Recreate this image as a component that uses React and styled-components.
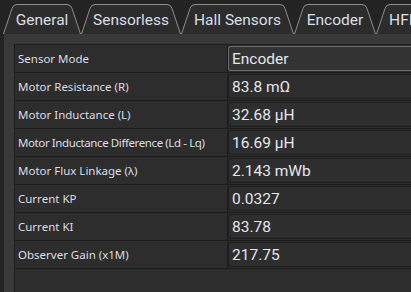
import React from "react";
import styled, { createGlobalStyle } from "styled-components";

const Global = createGlobalStyle`
  html, body { margin: 0; padding: 0; background: #232323; overflow: hidden; }
  body { width: 411px; height: 292px; }
`;

const Page = styled.div`
  width: 411px;
  height: 292px;
  background: #232323;
  display: flex;
  flex-direction: column;
  overflow: hidden;
`;

const TabBar = styled.div`
  height: 34px;
  display: flex;
  align-items: flex-end;
  padding-left: 3px;
  flex-shrink: 0;
`;

const Tab = styled.div`
  position: relative;
  height: 30px;
  flex-shrink: 0;
  width: ${(p) => p.$w}px;
  display: flex;
  align-items: center;
  justify-content: center;
  font-family: Roboto, "Liberation Sans", sans-serif;
  font-size: 15.5px;
  color: #dadee6;
  white-space: nowrap;
  span { position: relative; padding-top: 1px; }
`;

const TabShape = styled.svg`
  position: absolute;
  left: 0;
  top: 0;
  overflow: visible;
`;

const Pane = styled.div`
  flex: 1;
  margin-left: 4px;
  background: #393939;
  padding: 10px 0 0 10px;
  display: flex;
  min-height: 0;
`;

const Table = styled.div`
  flex: 1;
  background: #2d2d2d;
  border-top: 1px solid #1c1c1c;
  border-left: 1px solid #1c1c1c;
  display: grid;
  grid-template-columns: 213px 1fr;
  grid-auto-rows: 28px;
  align-content: start;
`;

const Label = styled.div`
  box-sizing: border-box;
  border-right: 1px solid #1c1c1c;
  border-bottom: 1px solid #1c1c1c;
  display: flex;
  align-items: center;
  padding-left: 3px;
  font-family: "Noto Sans", "Open Sans", sans-serif;
  font-size: 11.5px;
  letter-spacing: ${(p) => (p.$tight ? "-0.4px" : "0")};
  color: #dcdfe6;
  white-space: nowrap;
  overflow: hidden;
`;

const Cell = styled.div`
  box-sizing: border-box;
  border-bottom: 1px solid #1c1c1c;
  padding: 1px 0 1px 0;
  display: flex;
`;

const Field = styled.div`
  flex: 1;
  box-sizing: border-box;
  display: flex;
  align-items: center;
  padding-left: 3px;
  border: 1px solid ${(p) => (p.$combo ? "#6c6c6c" : "#1e1e1e")};
  border-right: none;
  border-radius: 3px 0 0 3px;
  background: ${(p) => (p.$combo ? "#333333" : "#2e2e2e")};
  font-family: Roboto, "Liberation Sans", sans-serif;
  font-size: 15.5px;
  color: #e4e7ee;
  white-space: nowrap;
`;

const tabs = [
  { name: "General", w: 78 },
  { name: "Sensorless", w: 100 },
  { name: "Hall Sensors", w: 113 },
  { name: "Encoder", w: 82 },
  { name: "HFI", w: 50 },
];

const rows = [
  ["Sensor Mode", "Encoder", true],
  ["Motor Resistance (R)", "83.8 mΩ"],
  ["Motor Inductance (L)", "32.68 μH"],
  ["Motor Inductance Difference (Ld - Lq)", "16.69 μH", false, true],
  ["Motor Flux Linkage (λ)", "2.143 mWb"],
  ["Current KP", "0.0327"],
  ["Current KI", "83.78"],
  ["Observer Gain (x1M)", "217.75"],
];

function TabOutline({ w }) {
  const h = 30;
  const s = 10;
  const r = 4;
  const d = `M0.5 ${h} L${s - 1} ${r + 0.5} Q${s} 0.5 ${s + r} 0.5 L${w - s - r} 0.5 Q${w - s} 0.5 ${w - s + 1} ${r + 0.5} L${w - 0.5} ${h}`;
  return (
    <TabShape width={w} height={h} viewBox={`0 0 ${w} ${h}`}>
      <path d={d + " Z"} fill="#2c2c2c" stroke="none" />
      <path d={d} fill="none" stroke="#8e8e8e" strokeWidth="1" />
    </TabShape>
  );
}

export default function App() {
  return (
    <>
      <Global />
      <Page>
        <TabBar>
          {tabs.map((t) => (
            <Tab key={t.name} $w={t.w}>
              <TabOutline w={t.w} />
              <span>{t.name}</span>
            </Tab>
          ))}
        </TabBar>
        <Pane>
          <Table>
            {rows.map(([l, v, combo, tight]) => (
              <React.Fragment key={l}>
                <Label $tight={tight}>{l}</Label>
                <Cell>
                  <Field $combo={combo}>{v}</Field>
                </Cell>
              </React.Fragment>
            ))}
          </Table>
        </Pane>
      </Page>
    </>
  );
}
